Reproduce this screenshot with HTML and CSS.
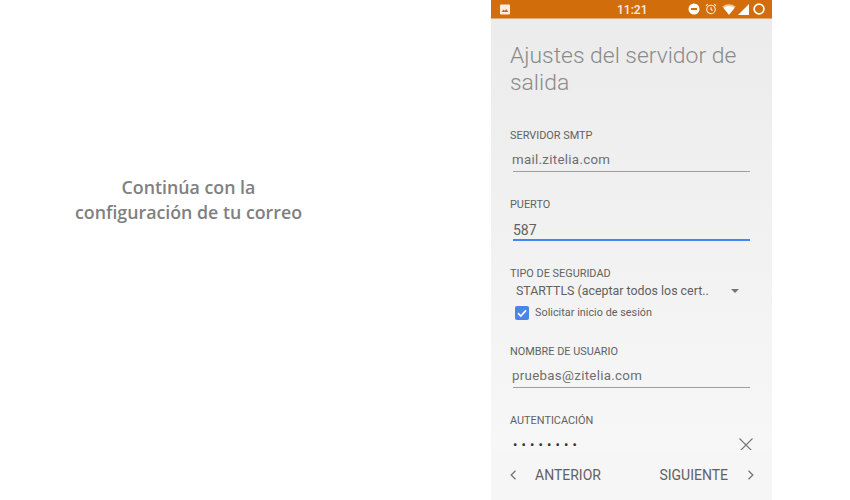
FILE: index.html
```html
<!DOCTYPE html>
<html lang="es">
<head>
<meta charset="utf-8">
<title>Ajustes del servidor de salida</title>
<link rel="stylesheet" href="styles.css">
</head>
<body>
<div class="page">
  <section class="intro">
    <p class="intro-text">Continúa con la<br>configuración de tu correo</p>
  </section>
  <section class="phone">
    <header class="status">
      <svg class="status-pic" width="12" height="11" viewBox="0 0 12 11"><rect x="1" y="0.5" width="10" height="10" rx="1" fill="#fbeee2"/><path d="M2.5 8l2-2.4 1.3 1.2 1.3-1.8L9.5 8z" fill="#d16d0b"/></svg>
      <span class="status-time">11:21</span>
      <span class="status-icons">
        <svg width="12" height="12" viewBox="0 0 12 12"><circle cx="6" cy="6" r="5.5" fill="#fff"/><rect x="3" y="5" width="6" height="2" fill="#d16d0b"/></svg>
        <svg class="status-alarm" width="12" height="12" viewBox="0 0 13 13" fill="none" stroke="#fbeee2" stroke-width="1.2"><circle cx="6.5" cy="7" r="4.6"/><path d="M6.5 4.5V7l1.7 1.2M1 3.2L3 1.3M12 3.2L10 1.3"/></svg>
        <svg class="status-wifi" width="14" height="11" viewBox="0 0 14 11"><path d="M0.3 2.6C4-.7 10-.7 13.7 2.6L7 10.8z" fill="#fff" opacity=".6"/><path d="M1.6 3.9C4.6 1.2 9.4 1.2 12.4 3.9L7 10.8z" fill="#fff"/></svg>
        <svg class="status-signal" width="11" height="11" viewBox="0 0 11 11"><path d="M11 0V11H0z" fill="#fff"/></svg>
        <svg class="status-ring" width="12" height="12" viewBox="0 0 12 12"><circle cx="6" cy="6" r="4.9" fill="none" stroke="#fff" stroke-width="1.7"/></svg>
      </span>
    </header>
    <main class="form">
      <h1 class="title">Ajustes del servidor de salida</h1>
      <div class="field field-first">
        <div class="label">SERVIDOR SMTP</div>
        <div class="input">mail.zitelia.com</div>
      </div>
      <div class="field">
        <div class="label">PUERTO</div>
        <div class="input input-active">587</div>
      </div>
      <div class="field">
        <div class="label">TIPO DE SEGURIDAD</div>
        <div class="select">
          <span>STARTTLS (aceptar todos los cert..</span>
          <svg width="8" height="4" viewBox="0 0 8 4"><path d="M0 0h8L4 4z" fill="#757575"/></svg>
        </div>
        <div class="check">
          <svg width="14" height="14" viewBox="0 0 14 14"><rect width="14" height="14" rx="2" fill="#4a86e8"/><path d="M3 7.2l2.8 2.8L11 4.4" fill="none" stroke="#fff" stroke-width="1.7"/></svg>
          <span>Solicitar inicio de sesión</span>
        </div>
      </div>
      <div class="field field-user">
        <div class="label">NOMBRE DE USUARIO</div>
        <div class="input">pruebas@zitelia.com</div>
      </div>
      <div class="field">
        <div class="label">AUTENTICACIÓN</div>
        <div class="password">
          <span class="dots">••••••••</span>
          <svg width="14" height="14" viewBox="0 0 14 14"><path d="M.5 .5l13 13M13.5 .5l-13 13" stroke="#757575" stroke-width="1.1" fill="none"/></svg>
        </div>
      </div>
    </main>
    <footer class="nav">
      <span class="nav-item">
        <svg width="6" height="10" viewBox="0 0 6 10"><path d="M5.5 .8L1.2 5l4.3 4.2" fill="none" stroke="#757575" stroke-width="1.3"/></svg>
        <span class="nav-back">ANTERIOR</span>
      </span>
      <span class="nav-item">
        <span class="nav-next">SIGUIENTE</span>
        <svg width="6" height="10" viewBox="0 0 6 10"><path d="M.5 .8L4.8 5 .5 9.2" fill="none" stroke="#757575" stroke-width="1.3"/></svg>
      </span>
    </footer>
  </section>
</div>
</body>
</html>
```

FILE: styles.css
```css
* { box-sizing: border-box; }
html, body { margin: 0; padding: 0; background: #fff; }
.page { display: flex; width: 850px; height: 500px; overflow: hidden; }
.intro { width: 377px; padding-top: 175px; flex: none; }
.intro-text {
  margin: 0; text-align: center; font: 600 17.8px/25px "Open Sans", sans-serif; color: #808080;
}
.phone {
  width: 281px; height: 500px; margin-left: 114px; flex: none; display: flex; flex-direction: column;
  font-family: Roboto, sans-serif; background: linear-gradient(#ebebeb, #f7f7f7 90%);
}
.status {
  height: 19px; flex: none; background: #d16d0b; border-bottom: 1px solid #e5a877;
  display: flex; align-items: center; padding: 0 7px 0 8px; position: relative; color: #fbeee2;
}
.status-pic { flex: none; }
.status-time { position: absolute; left: 126px; top: 3px; font: 500 12px/15px Roboto, sans-serif; }
.status-icons { margin-left: auto; display: flex; align-items: center; }
.status-alarm { margin-left: 5px; }
.status-wifi { margin-left: 5px; }
.status-signal { margin-left: 2px; }
.status-ring { margin-left: 4px; }
.form { flex: 1; min-height: 0; padding: 23px 22px 0 19px; }
.title {
  margin: 0; font: 300 22.9px/27px Roboto, sans-serif; color: #8a8a8a; width: 240px;
}
.field { margin-top: 26px; }
.field-first { margin-top: 33px; }
.field-user { margin-top: 24px; }
.label { font: 400 10.9px/14px Roboto, sans-serif; color: #616161; }
.input {
  margin-top: 8px; height: 21px; margin-left: 3px; border-bottom: 1px solid #9e9e9e;
  font: 400 13.3px/18px Roboto, sans-serif; letter-spacing: .3px; color: #6e6e6e; text-indent: -1px;
}
.input-active { border-bottom: 2px solid #4285f4; color: #616161; font-size: 14px; line-height: 20px; letter-spacing: 0; text-indent: 0; }
.select {
  display: flex; align-items: center; justify-content: space-between; margin-left: 6px; padding-right: 11px;
  margin-top: 1px; height: 18px; font: 400 12.4px/18px Roboto, sans-serif; color: #616161;
}
.check {
  display: flex; align-items: center; gap: 6px; margin: 5px 0 0 5px; height: 16px;
  font: 400 10.8px/16px Roboto, sans-serif; color: #616161; letter-spacing: .03px;
}
.password {
  display: flex; align-items: center; justify-content: space-between; margin-top: 9px; height: 16px;
  padding: 0 0 0 3px; width: 243px; color: #333;
}
.dots { font: 400 13px/16px Roboto, sans-serif; letter-spacing: 4.1px; }
.nav {
  height: 50px; flex: none; display: flex; align-items: center; justify-content: space-between;
  padding: 0 18px 0 19px; background: #f6f6f6; font: 400 14px/18px Roboto, sans-serif; color: #616161;
}
.nav-item { display: flex; align-items: center; }
.nav-back { margin-left: 19px; }
.nav-next { margin-right: 20px; }
```
